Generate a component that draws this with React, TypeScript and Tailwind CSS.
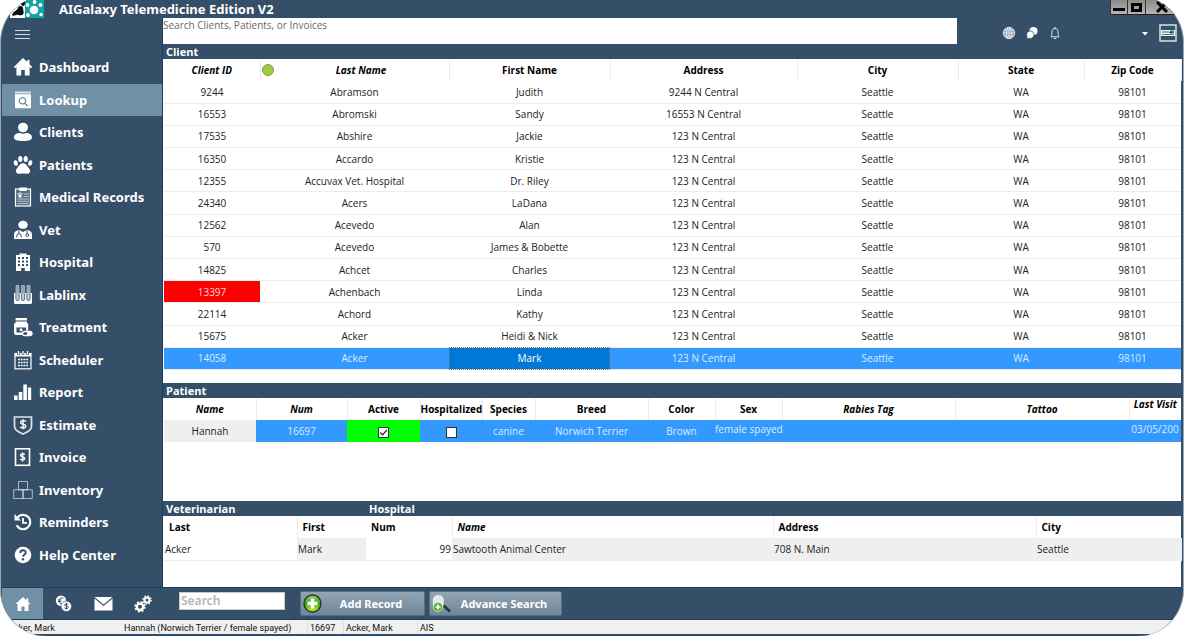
import type { ReactNode } from "react";
import { clsx } from "clsx";

// Practice management shell: side nav, three stacked record grids, action bar
// and a status strip. Grid cells share one text size; column widths are ratios
// that table-fixed spreads over the available width.

interface Client {
  id: string;
  last: string;
  first: string;
  address: string;
  alert?: boolean;
}

const CLIENTS: Client[] = [
  { id: "9244", last: "Abramson", first: "Judith", address: "9244 N Central" },
  { id: "16553", last: "Abromski", first: "Sandy", address: "16553 N Central" },
  { id: "17535", last: "Abshire", first: "Jackie", address: "123 N Central" },
  { id: "16350", last: "Accardo", first: "Kristie", address: "123 N Central" },
  { id: "12355", last: "Accuvax Vet. Hospital", first: "Dr. Riley", address: "123 N Central" },
  { id: "24340", last: "Acers", first: "LaDana", address: "123 N Central" },
  { id: "12562", last: "Acevedo", first: "Alan", address: "123 N Central" },
  { id: "570", last: "Acevedo", first: "James & Bobette", address: "123 N Central" },
  { id: "14825", last: "Achcet", first: "Charles", address: "123 N Central" },
  { id: "13397", last: "Achenbach", first: "Linda", address: "123 N Central", alert: true },
  { id: "22114", last: "Achord", first: "Kathy", address: "123 N Central" },
  { id: "15675", last: "Acker", first: "Heidi & Nick", address: "123 N Central" },
  { id: "14058", last: "Acker", first: "Mark", address: "123 N Central" },
];

const SELECTED_ID = "14058";

const PATIENT_COLS = [
  { label: "Name", width: 92, italic: true },
  { label: "Num", width: 91, italic: true },
  { label: "Active", width: 73 },
  { label: "Hospitalized", width: 62 },
  { label: "Species", width: 53 },
  { label: "Breed", width: 113 },
  { label: "Color", width: 67 },
  { label: "Sex", width: 67 },
  { label: "Rabies Tag", width: 173, italic: true },
  { label: "Tattoo", width: 174, italic: true },
];

function Icon({ children, size = 20 }: { children: ReactNode; size?: number }) {
  return (
    <svg width={size} height={size} viewBox="0 0 20 20" fill="currentColor" aria-hidden="true" className="shrink-0">
      {children}
    </svg>
  );
}

const HomeIcon = () => (
  <Icon>
    <path d="M10 1 0.8 10l1.2 1.2 1.4-1.2v8.5h4.8v-5.6h3.6v5.6h4.8V10l1.4 1.2 1.2-1.2-2.7-2.7V3h-2.3v2.1z" />
  </Icon>
);

const LookupIcon = () => (
  <Icon>
    <path d="M2 1.5h16v2H2z" opacity=".75" />
    <path fillRule="evenodd" d="M2 4.3h16v14H2zM9.4 7a3.8 3.8 0 1 0 2.1 7l2.6 2.5 1-1-2.5-2.5A3.8 3.8 0 0 0 9.400 7zm0 1.300a2.500 2.500 0 1 1 0 5 2.500 2.500 0 0 1 0-5z" />
  </Icon>
);

const ClientsIcon = () => (
  <Icon>
    <ellipse cx="10" cy="5.500" rx="5" ry="4.800" />
    <path d="M1 15.500c0-3 2.500-4.600 6-4.600 2 1 4 1 6 0 3.500 0 6 1.600 6 4.600 0 2.500-3.500 3.500-9 3.500s-9-1-9-3.500z" />
  </Icon>
);

const PawIcon = () => (
  <Icon>
    <ellipse cx="2.800" cy="8" rx="2" ry="2.800" transform="rotate(-15 2.800 8)" />
    <ellipse cx="7.300" cy="4" rx="2.100" ry="3" />
    <ellipse cx="12.700" cy="4" rx="2.100" ry="3" />
    <ellipse cx="17.200" cy="8" rx="2" ry="2.800" transform="rotate(15 17.200 8)" />
    <path d="M10 8.200c2.500 0 3.800 2 5 3.800 1.200 1.700 2.400 2.800 2.100 4.400-.4 2.200-3 2.800-4.700 2.300-1.500-.4-3.300-.4-4.800 0-1.700.5-4.300-.1-4.700-2.300C2.600 14.800 3.800 13.700 5 12c1.200-1.800 2.500-3.800 5-3.800z" />
  </Icon>
);

const RecordsIcon = () => (
  <Icon>
    <rect x="2.500" y="2" width="15" height="17" fill="#ffffff" fillOpacity=".18" stroke="currentColor" strokeWidth="1.200" />
    <rect x="6" y=".5" width="8" height="3.500" rx="1" />
    <circle cx="7" cy="9" r="1.700" />
    <circle cx="5.200" cy="6.700" r=".8" />
    <circle cx="7" cy="6" r=".8" />
    <circle cx="8.800" cy="6.700" r=".8" />
    <path d="M10.500 7h5.500M10.500 9.500h5.500M4.500 12h11.500M4.500 14.300h11.500M4.500 16.600h11.500" stroke="currentColor" strokeWidth=".6" />
  </Icon>
);

const VetIcon = () => (
  <Icon>
    <ellipse cx="10" cy="4.800" rx="4.800" ry="4" />
    <path d="M1 19v-4.500c0-2.500 2-4.300 5-4.500l4 2 4-2c3 .2 5 2 5 4.500V19z" />
    <path d="M5.800 10.500v3M14 10.500v3" stroke="#344f67" strokeWidth="1" />
    <path d="M3.800 17.500v-1.600a2.200 2.200 0 0 1 4.400 0v1.600" stroke="#344f67" strokeWidth="1" fill="none" />
    <circle cx="14.200" cy="15" r="1.400" stroke="#344f67" strokeWidth="1" fill="none" />
  </Icon>
);

const HospitalIcon = () => (
  <Icon>
    <path d="M6.500 1.500h7V3H17v16h-5.200v-3H8.200v3H3V3h3.500z" />
    <path d="M5 6h10M5 9.500h10M5 13h10" stroke="#344f67" strokeWidth="2" strokeDasharray="2 2" />
  </Icon>
);

const TubesIcon = () => (
  <Icon>
    <path d="M1 8h18v9.500q0 1.500-1.500 1.500h-15Q1 19 1 17.500z" />
    {[4.5, 10, 15.5].map((x) => (
      <g key={x}>
        <path d={`M${x - 1.6} 7.5v6.500a1.600 1.600 0 0 0 3.200 0V7.500`} fill="#c3cdd6" stroke="#344f67" strokeWidth=".8" />
        <path d={`M${x - 1.5} .5h3v8h-3z`} fill="#8fa2b3" stroke="#b7c3cd" strokeWidth=".7" />
      </g>
    ))}
  </Icon>
);

const TreatmentIcon = () => (
  <Icon>
    <rect x="2.500" y="1" width="11.500" height="2.500" rx=".8" />
    <path d="M2.500 4.500h11.500v1.200l1.200 1.300v6.500H13v-3H3.500v5H9V18H3q-2 0-2-2V7l1.500-1.300z" />
    <circle cx="8" cy="12.800" r="1.500" />
    <rect x="9.500" y="14.500" width="9.500" height="4" rx="2" fill="none" stroke="currentColor" strokeWidth="1.300" />
    <path d="M14 14.500h3a2 2 0 0 1 0 4h-3z" />
  </Icon>
);

const SchedulerIcon = () => (
  <Icon>
    <rect x="2" y="3.500" width="16" height="15.300" fill="none" stroke="currentColor" strokeWidth="1.200" />
    <path d="M2 3.500h16v3H2z" />
    <path d="M5.500 1v4M10 1v4M14.500 1v4" stroke="#344f67" strokeWidth="2.600" />
    <path d="M5.500 1v3.500M10 1v3.500M14.500 1v3.500" stroke="currentColor" strokeWidth="1.300" />
    <path d="M5 9.500h10M5 12.500h10M5 15.500h10" stroke="currentColor" strokeWidth="1.700" strokeDasharray="1.900 .85" />
  </Icon>
);

const ReportIcon = () => (
  <Icon>
    <path d="M1 13.500h3.600V18H1zM5.700 10h3.600v8H5.700zM10.300 2.500h3.600V18h-3.600zM14.900 5.500h3.300V18h-3.300z" />
  </Icon>
);

const EstimateIcon = () => (
  <Icon>
    <path d="M1.500 2h17v9.500c0 3-3.500 5.500-8.500 7.500-5-2-8.500-4.500-8.500-7.500z" fill="none" stroke="currentColor" strokeWidth="1.700" opacity=".85" />
    <path d="M13 6.500c-1.200-1.100-5.400-1.400-5.400.9 0 2.500 5.200 1.300 5.200 3.800 0 2.400-4.400 2-5.700.8M10 4.300v10" fill="none" stroke="currentColor" strokeWidth="1.400" />
  </Icon>
);

const InvoiceIcon = () => (
  <Icon>
    <rect x="2.500" y="1.800" width="14" height="16.500" fill="none" stroke="currentColor" strokeWidth="1.600" />
    <path d="M11.800 7.500c-1-.9-4.300-1-4.300.7 0 2 4.200 1 4.200 3.200 0 1.900-3.500 1.600-4.500.5M9.600 5.600v8.800" fill="none" stroke="currentColor" strokeWidth="1.500" />
  </Icon>
);

const InventoryIcon = () => (
  <Icon>
    <path d="M5.500 1.500h9v8.300h-9zM.7 9.800h9.300v8.700H.7zM10 9.800h9.300v8.700H10z" fill="none" stroke="currentColor" strokeWidth="1" opacity=".6" />
  </Icon>
);

const RemindersIcon = () => (
  <Icon>
    <path d="M4.500 5.500a7.200 7.200 0 1 1-.8 7.800" fill="none" stroke="currentColor" strokeWidth="2.200" />
    <path d="M1.500 2v6.500H8z" />
    <path d="M10 6v4.800h4" fill="none" stroke="currentColor" strokeWidth="1.800" />
  </Icon>
);

const HelpIcon = () => (
  <Icon>
    <circle cx="10" cy="10" r="8.300" />
    <path d="M7.300 8c0-3.600 5.500-3.500 5.500-.4 0 2-2.700 2-2.700 4.100" fill="none" stroke="#344f67" strokeWidth="1.900" />
    <circle cx="10" cy="14.300" r="1.200" fill="#344f67" />
  </Icon>
);

const NAV: { label: string; icon: () => ReactNode }[] = [
  { label: "Dashboard", icon: HomeIcon },
  { label: "Lookup", icon: LookupIcon },
  { label: "Clients", icon: ClientsIcon },
  { label: "Patients", icon: PawIcon },
  { label: "Medical Records", icon: RecordsIcon },
  { label: "Vet", icon: VetIcon },
  { label: "Hospital", icon: HospitalIcon },
  { label: "Lablinx", icon: TubesIcon },
  { label: "Treatment", icon: TreatmentIcon },
  { label: "Scheduler", icon: SchedulerIcon },
  { label: "Report", icon: ReportIcon },
  { label: "Estimate", icon: EstimateIcon },
  { label: "Invoice", icon: InvoiceIcon },
  { label: "Inventory", icon: InventoryIcon },
  { label: "Reminders", icon: RemindersIcon },
  { label: "Help Center", icon: HelpIcon },
];

function TitleBar() {
  return (
    <header className="flex h-[18px] items-start">
      <svg width="34" height="18" viewBox="0 0 34 18" className="ml-2 shrink-0" aria-hidden="true">
        <path d="M0 0h15v18H0z" fill="#fff" />
        <path d="M15 0h19v18H15z" fill="#12a5a3" />
        <path d="M2 15c1-4 5-4 6-7s5-2 5 0 2 6-1 7-4-1-6 0-3 1-4 0z" fill="#0b0b0b" />
        <ellipse cx="13" cy="3" rx="2" ry="3" fill="#0b0b0b" />
        <circle cx="24" cy="10" r="4.300" fill="#fff" />
        <circle cx="17.500" cy="5" r="1.900" fill="#fff" />
        <circle cx="24.500" cy="2" r="1.900" fill="#fff" />
        <circle cx="30.500" cy="5" r="1.900" fill="#fff" />
        <circle cx="31" cy="14.500" r="1.700" fill="#fff" />
        <circle cx="18" cy="15" r="1.900" fill="#fff" />
      </svg>
      <h1 className="ml-[15px] font-['Noto_Sans','Open_Sans',sans-serif] text-[13px] leading-[18px] font-bold">
        AIGalaxy Telemedicine Edition V2
      </h1>
      <div className="ml-auto flex h-[15px] border-b border-[#222] text-black">
        <button type="button" aria-label="Minimize" className="flex w-[18px] items-end justify-center border-x border-[#333] bg-linear-to-b from-[#8a8a8a] to-[#b5b5b5] pb-[3px]">
          <span className="h-[3px] w-3 bg-black" />
        </button>
        <button type="button" aria-label="Maximize" className="flex w-[18px] items-center justify-center border-r border-[#333] bg-linear-to-b from-[#8a8a8a] to-[#b5b5b5]">
          <span className="h-[9px] w-[11px] border-[3px] border-black" />
        </button>
        <button type="button" aria-label="Close" className="flex w-9 items-center justify-center bg-linear-to-b from-[#8a8a8a] to-[#b5b5b5] pr-1">
          <svg width="12" height="12" viewBox="0 0 12 12" aria-hidden="true">
            <path d="M1 1l10 10M11 1 1 11" stroke="#000" strokeWidth="3" />
          </svg>
        </button>
      </div>
    </header>
  );
}

function SideNav() {
  return (
    <aside className="flex w-[161px] shrink-0 flex-col border-r border-[#1c3f5e]">
      <button type="button" aria-label="Toggle menu" className="flex h-[33px] items-center pl-[13px]">
        <span className="flex w-[15px] flex-col gap-[3px]">
          <span className="h-px bg-[#d5dce3]" />
          <span className="h-px bg-[#d5dce3]" />
          <span className="h-px bg-[#d5dce3]" />
        </span>
      </button>
      <nav className="flex min-h-[520px] flex-col">
        {NAV.map(({ label, icon: Glyph }) => (
          <a
            key={label}
            href={`#${label.toLowerCase().replace(" ", "-")}`}
            className={clsx(
              "flex flex-1 items-center gap-[6px] pl-[11px] font-['Noto_Sans','Open_Sans',sans-serif] text-[13px] leading-4 font-bold whitespace-nowrap",
              label === "Lookup" && "bg-[#7090a6]",
            )}
          >
            <Glyph />
            {label}
          </a>
        ))}
      </nav>
    </aside>
  );
}

function Toolbar() {
  return (
    <div className="flex h-[26px]">
      <input
        type="search"
        aria-label="Search Clients, Patients, or Invoices"
        placeholder="Search Clients, Patients, or Invoices"
        className="w-[78%] appearance-none bg-white pb-3 text-[10px] leading-[14px] text-black outline-none placeholder:text-[#6b6570]"
      />
      <div className="ml-auto flex items-center gap-[9px] pt-1 pr-1">
        <svg width="14" height="14" viewBox="0 0 14 14" fill="none" stroke="#e3e8ed" strokeWidth=".9" aria-hidden="true">
          <circle cx="7" cy="7" r="5.700" fill="#8ea0b0" />
          <ellipse cx="7" cy="7" rx="2.600" ry="5.700" />
          <path d="M7 1.300v11.400M1.300 7h11.400M2.300 4h9.400M2.300 10h9.400" />
        </svg>
        <svg width="14" height="14" viewBox="0 0 14 14" fill="#fff" aria-hidden="true">
          <circle cx="8.500" cy="5" r="4" />
          <path d="M5.400 5a3.700 3.700 0 1 1-1.300 7.200L1.500 13l.6-2.400A3.700 3.700 0 0 1 5.400 5z" stroke="#344f67" strokeWidth=".8" />
        </svg>
        <svg width="14" height="14" viewBox="0 0 14 14" fill="none" stroke="#e3e8ed" strokeWidth="1" aria-hidden="true">
          <path d="M3 10.800c1-1.500.8-3 1-5C4.200 3.500 5.200 2.500 7 2.500s2.800 1 3 3.300c.2 2 0 3.500 1 5zM7 2.500V1M5.800 12.500h2.400" />
        </svg>
        <button type="button" aria-label="Account menu" className="ml-[70px] flex items-center gap-[10px]">
          <svg width="8" height="5" viewBox="0 0 8 5" fill="#fff" aria-hidden="true">
            <path d="M1 1h6L4 4.500z" />
          </svg>
          <svg width="18" height="18" viewBox="0 0 18 18" aria-hidden="true">
            <rect x="1" y="1" width="16" height="16" fill="#344f67" stroke="#e8e8e8" strokeWidth="1.400" />
            <path d="M2 6h14v6H2z" fill="#f4f4f4" />
            <path d="M3 8h7" stroke="#36b0b0" strokeWidth="1.300" />
            <path d="M3 10.500h12" stroke="#6b7680" />
            <path d="M11 6.500h4v3h-4z" fill="#258d94" />
            <path d="M10 9l2-2 1 2z" fill="#111" />
          </svg>
        </button>
      </div>
    </div>
  );
}

function ClientGrid() {
  const head = "border-r border-[#ececec] font-bold text-black";
  return (
    <table className="h-[311px] w-full table-fixed border-collapse text-center">
      <colgroup>
        <col width={96} />
        <col width={189} />
        <col width={161} />
        <col width={187} />
        <col width={161} />
        <col width={126} />
        <col width={97} />
      </colgroup>
      <thead>
        <tr className="h-[22px]">
          <th className={clsx(head, "italic")}>Client ID</th>
          <th className={clsx(head, "italic")}>
            <div className="flex items-center">
              <span className="ml-px size-3 rounded-full border border-[#8a9a45] bg-[#9ccb45]" />
              <span className="flex-1">Last Name</span>
            </div>
          </th>
          <th className={head}>First Name</th>
          <th className={head}>Address</th>
          <th className={head}>City</th>
          <th className={head}>State</th>
          <th className={head}>Zip Code</th>
        </tr>
      </thead>
      <tbody>
        {CLIENTS.map((c) => {
          const selected = c.id === SELECTED_ID;
          return (
            <tr
              key={c.id}
              aria-selected={selected}
              className={clsx("h-[22px] border-b border-[#ececec]", selected && "bg-[#3399ff] text-[#d9ecff]")}
            >
              <td className={clsx(c.alert && "bg-[#ff0000] text-[#ffd5d5]")}>{c.id}</td>
              <td>{c.last}</td>
              <td className={clsx(selected && "bg-[#0078d7] text-white outline-1 -outline-offset-1 outline-dotted outline-[#8a7a60]")}>
                {c.first}
              </td>
              <td>{c.address}</td>
              <td>Seattle</td>
              <td>WA</td>
              <td>98101</td>
            </tr>
          );
        })}
      </tbody>
    </table>
  );
}

function TickBox({ label, checked = false }: { label: string; checked?: boolean }) {
  return (
    <span className="inline-grid align-middle">
      <input
        type="checkbox"
        aria-label={label}
        defaultChecked={checked}
        className="peer col-start-1 row-start-1 size-[11px] appearance-none border border-[#333] bg-white"
      />
      <svg
        width="11"
        height="11"
        viewBox="0 0 11 11"
        aria-hidden="true"
        className="pointer-events-none invisible col-start-1 row-start-1 peer-checked:visible"
      >
        <path d="M2.300 5.500 4.500 7.800 8.800 3" fill="none" stroke="#222" strokeWidth="1.200" />
      </svg>
    </span>
  );
}

function PatientGrid() {
  return (
    <table className="w-full table-fixed border-collapse text-center">
      <colgroup>
        {PATIENT_COLS.map((c) => (
          <col key={c.label} width={c.width} />
        ))}
        <col width={52} />
      </colgroup>
      <thead>
        <tr className="h-[22px]">
          {PATIENT_COLS.map((c) => (
            <th
              key={c.label}
              className={clsx("border-r border-[#ececec] font-bold whitespace-nowrap text-black", c.italic && "italic")}
            >
              {c.label}
            </th>
          ))}
          <th className="align-top leading-3 font-bold whitespace-nowrap text-black italic">Last Visit</th>
        </tr>
      </thead>
      <tbody>
        <tr className="h-[22px] bg-[#3399ff] text-[#d9ecff]">
          <td className="bg-[#efefef] text-[#222]">Hannah</td>
          <td>16697</td>
          <td className="bg-[#00ff00]">
            <TickBox label="Active" checked />
          </td>
          <td>
            <TickBox label="Hospitalized" />
          </td>
          <td>canine</td>
          <td>Norwich Terrier</td>
          <td>Brown</td>
          <td className="pb-1 whitespace-nowrap">female spayed</td>
          <td />
          <td />
          <td className="overflow-hidden pb-1 whitespace-nowrap">03/05/200</td>
        </tr>
      </tbody>
    </table>
  );
}

function ReferralGrid() {
  const head = "border-r border-[#ececec] px-[5px] font-bold text-black";
  return (
    <table className="w-full table-fixed border-collapse text-left">
      <colgroup>
        <col width={133} />
        <col width={69} />
        <col width={86} />
        <col width={321} />
        <col width={263} />
        <col width={146} />
      </colgroup>
      <thead>
        <tr className="h-[22px]">
          <th className={head}>Last</th>
          <th className="px-[5px] font-bold text-black">First</th>
          <th className={head}>Num</th>
          <th className={clsx(head, "italic")}>Name</th>
          <th className={head}>Address</th>
          <th className="px-[5px] font-bold text-black">City</th>
        </tr>
      </thead>
      <tbody>
        <tr className="h-[22px] border-b border-[#ececec]">
          <td className="px-px">Acker</td>
          <td className="bg-[#efefef] px-px">Mark</td>
          <td className="px-px text-right">99</td>
          <td className="bg-[#efefef] px-px">Sawtooth Animal Center</td>
          <td className="bg-[#efefef] px-px">708 N. Main</td>
          <td className="bg-[#efefef] px-px">Seattle</td>
        </tr>
      </tbody>
    </table>
  );
}

function SectionTitle({ children }: { children: ReactNode }) {
  return <div className="flex h-[15px] items-center pl-[3px] text-[11px] leading-[15px] font-bold">{children}</div>;
}

function ActionBar() {
  const action =
    "flex h-[25px] items-center rounded-xs border border-[#566f84] bg-linear-to-b from-[#93a5b4] to-[#70869a] font-['Noto_Sans','Open_Sans',sans-serif] text-[11px] font-bold";
  return (
    <div className="flex h-[33px] items-center border-y border-[#1c3f5e]">
      <button type="button" aria-label="Home" className="flex h-full w-[41px] items-center justify-center bg-[#7090a6]">
        <svg width="16" height="14" viewBox="0 0 16 14" fill="#fff" aria-hidden="true">
          <path d="M8 0 .5 7h2v7h4V9.500h3V14h4V7h2L13.300 5V1.500h-2v1.800z" />
        </svg>
      </button>
      <button type="button" aria-label="Currency" className="flex w-10 justify-center">
        <svg width="17" height="17" viewBox="0 0 17 17" aria-hidden="true">
          <circle cx="6" cy="5.700" r="5.200" fill="#fff" />
          <path d="M8.500 3.500c-2.500-1.600-4.500 0-4.500 2.200s2 3.800 4.200 2.500M3 5h3.500M3 6.500h3" stroke="#344f67" fill="none" />
          <circle cx="11.300" cy="11.300" r="5.300" fill="#fff" stroke="#344f67" strokeWidth=".7" />
          <path d="M13.200 9.600c-1-1-3.800-.9-3.600.5.200 1.300 3.700.7 3.700 2.300s-3 1.500-3.900.4M11.400 7.800v7" stroke="#344f67" fill="none" />
        </svg>
      </button>
      <button type="button" aria-label="Mail" className="flex w-10 justify-center">
        <svg width="19" height="15" viewBox="0 0 19 15" fill="#fff" aria-hidden="true">
          <path d="M.5 1h18L9.500 8.500zM.5 2.500l9 7.500 9-7.500V14.500H.5z" />
        </svg>
      </button>
      <button type="button" aria-label="Settings" className="flex w-10 justify-center">
        <svg width="18" height="18" viewBox="0 0 18 18" fill="none" stroke="#fff" aria-hidden="true">
          <circle cx="6" cy="11.800" r="3.200" strokeWidth="2.400" />
          <circle cx="6" cy="11.800" r="4.800" strokeWidth="1.700" strokeDasharray="2 1.770" />
          <circle cx="13" cy="5" r="2.500" strokeWidth="2" />
          <circle cx="13" cy="5" r="4" strokeWidth="1.500" strokeDasharray="1.600 1.540" />
        </svg>
      </button>
      <input
        type="search"
        aria-label="Search"
        placeholder="Search"
        className="mb-1.5 ml-4 h-[18px] w-[106px] appearance-none border border-[#c9c9bd] bg-white px-px font-['Noto_Sans','Open_Sans',sans-serif] text-[12px] font-semibold text-black outline-none placeholder:text-[#b4b4b4]"
      />
      <button type="button" className={clsx(action, "ml-[15px] w-[125px] pl-0.5")}>
        <svg width="19" height="19" viewBox="0 0 19 19" aria-hidden="true">
          <defs>
            <linearGradient id="add-fill" x1="0" y1="0" x2="0" y2="1">
              <stop offset="0" stopColor="#9fd66a" />
              <stop offset=".5" stopColor="#35a51c" />
              <stop offset="1" stopColor="#e3f51c" />
            </linearGradient>
          </defs>
          <circle cx="9.500" cy="9.500" r="8.500" fill="url(#add-fill)" stroke="#263524" strokeWidth="1.400" />
          <path d="M9.500 4.500v10M4.500 9.500h10" stroke="#fff" strokeWidth="3.600" />
        </svg>
        <span className="flex-1 pr-1">Add Record</span>
      </button>
      <button type="button" className={clsx(action, "ml-1 w-[133px] pl-0.5")}>
        <svg width="19" height="19" viewBox="0 0 19 19" aria-hidden="true">
          <path d="m11 11 7 6.500" stroke="#2b3036" strokeWidth="2.600" />
          <rect x=".8" y="1" width="11" height="14" rx="5" fill="#e3e9ec" />
          <circle cx="6" cy="13" r="4.600" fill="#4fb32b" stroke="#d5e8cd" strokeWidth=".8" />
          <path d="M6 10.400v5.200M3.400 13h5.200" stroke="#fff" strokeWidth="1.700" />
        </svg>
        <span className="flex-1 pr-1">Advance Search</span>
      </button>
    </div>
  );
}

function StatusBar() {
  return (
    <footer className="flex h-4 items-center border-b-2 border-[#2c4d6b] bg-[#f0f0f0] pt-0.5 font-[Roboto,sans-serif] text-[9px] leading-3 whitespace-nowrap text-[#111]">
      <span className="w-[122px] pl-1.5">Acker, Mark</span>
      <span className="w-[183px]">Hannah (Norwich Terrier / female spayed)</span>
      <span className="w-[37px] border-x border-[#dcdcdc] pl-0.5">16697</span>
      <span className="w-[74px] border-r border-[#dcdcdc] pl-0.5">Acker, Mark</span>
      <span className="pl-0.5">AIS</span>
    </footer>
  );
}

export default function App() {
  return (
    <div className="-mt-1 overflow-hidden rounded-[46px] border-x border-[#9aa9b5] bg-[#344f67] px-px pt-1 font-['Open_Sans','Noto_Sans',sans-serif] text-[10px] leading-[14px] text-white">
      <TitleBar />
      <div className="flex">
        <SideNav />
        <main className="min-w-0 flex-1 pr-px">
          <Toolbar />
          <SectionTitle>Client</SectionTitle>
          <section aria-label="Client" className="min-h-[324px] bg-white pl-px text-[#222]">
            <ClientGrid />
          </section>
          <SectionTitle>Patient</SectionTitle>
          <section aria-label="Patient" className="min-h-[103px] bg-white pl-px text-[#222]">
            <PatientGrid />
          </section>
          <SectionTitle>
            <span className="w-1/5">Veterinarian</span>
            <span>Hospital</span>
          </SectionTitle>
          <section aria-label="Referral" className="min-h-[71px] bg-white pl-px text-[#222]">
            <ReferralGrid />
          </section>
        </main>
      </div>
      <ActionBar />
      <StatusBar />
    </div>
  );
}
